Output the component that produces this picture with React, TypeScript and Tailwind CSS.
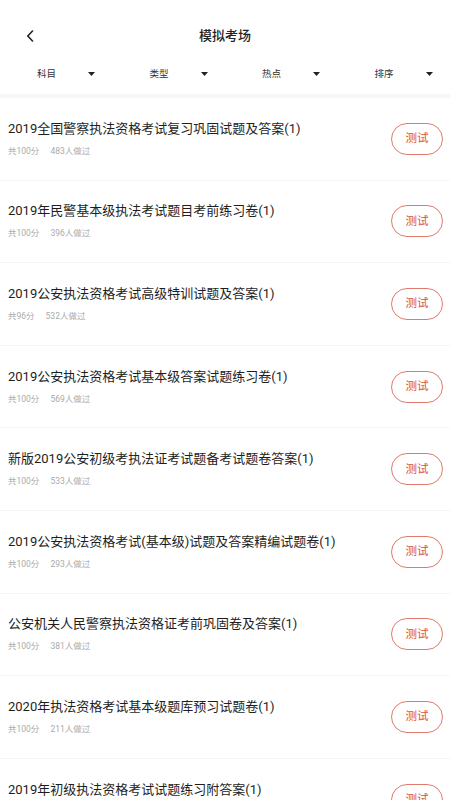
import React from "react";

const items = [
  { title: "2019全国警察执法资格考试复习巩固试题及答案(1)", score: 100, done: 483 },
  { title: "2019年民警基本级执法考试题目考前练习卷(1)", score: 100, done: 396 },
  { title: "2019公安执法资格考试高级特训试题及答案(1)", score: 96, done: 532 },
  { title: "2019公安执法资格考试基本级答案试题练习卷(1)", score: 100, done: 569 },
  { title: "新版2019公安初级考执法证考试题备考试题卷答案(1)", score: 100, done: 533 },
  { title: "2019公安执法资格考试(基本级)试题及答案精编试题卷(1)", score: 100, done: 293 },
  { title: "公安机关人民警察执法资格证考前巩固卷及答案(1)", score: 100, done: 381 },
  { title: "2020年执法资格考试基本级题库预习试题卷(1)", score: 100, done: 211 },
  { title: "2019年初级执法资格考试试题练习附答案(1)", score: 100, done: 402 },
];

const filters = ["科目", "类型", "热点", "排序"];

export default function App() {
  return (
    <div
      className="w-[450px] h-[800px] overflow-hidden bg-white"
      style={{ fontFamily: 'Roboto, "Noto Sans CJK SC", sans-serif' }}
    >
      <div className="mt-[18px] h-[36px] relative flex items-center justify-center">
        <div className="absolute left-[26px] top-[12px]">
          <svg width="9" height="12" viewBox="0 0 9 12">
            <path d="M6.5 1 L1.8 6 L6.5 11" fill="none" stroke="#222" strokeWidth="1.6" strokeLinecap="round" strokeLinejoin="round" />
          </svg>
        </div>
        <span className="text-[13px] font-medium text-[#222]">模拟考场</span>
      </div>
      <div className="h-[40px] grid grid-cols-4">
        {filters.map((f) => (
          <div key={f} className="flex items-center pl-[37px]">
            <span className="text-[9.5px] text-[#333] w-[51px]">{f}</span>
            <svg width="7" height="4" viewBox="0 0 7 4">
              <path d="M0 0 L7 0 L3.5 4 Z" fill="#222" />
            </svg>
          </div>
        ))}
      </div>
      <div className="h-[4px] bg-[#f6f6f6]" />
      {items.map((it, i) => (
        <div key={i} className="h-[82.6px] border-b border-[#f5f5f5] flex items-center pl-[8px] pr-[7px]">
          <div className="flex-1 flex flex-col">
            <div className="text-[13px] leading-[18px] text-[#1e1e1e] -mt-[1px]">{it.title}</div>
            <div className="mt-[7px] flex text-[8.5px] leading-[12px] text-[#aaaaaa]">
              <span>共{it.score}分</span>
              <span className="ml-[11px]">{it.done}人做过</span>
            </div>
          </div>
          <div className="w-[52px] h-[32px] rounded-full border border-[#e07b6c] flex items-center justify-center text-[11.5px] text-[#d9553a]">
            测试
          </div>
        </div>
      ))}
    </div>
  );
}
